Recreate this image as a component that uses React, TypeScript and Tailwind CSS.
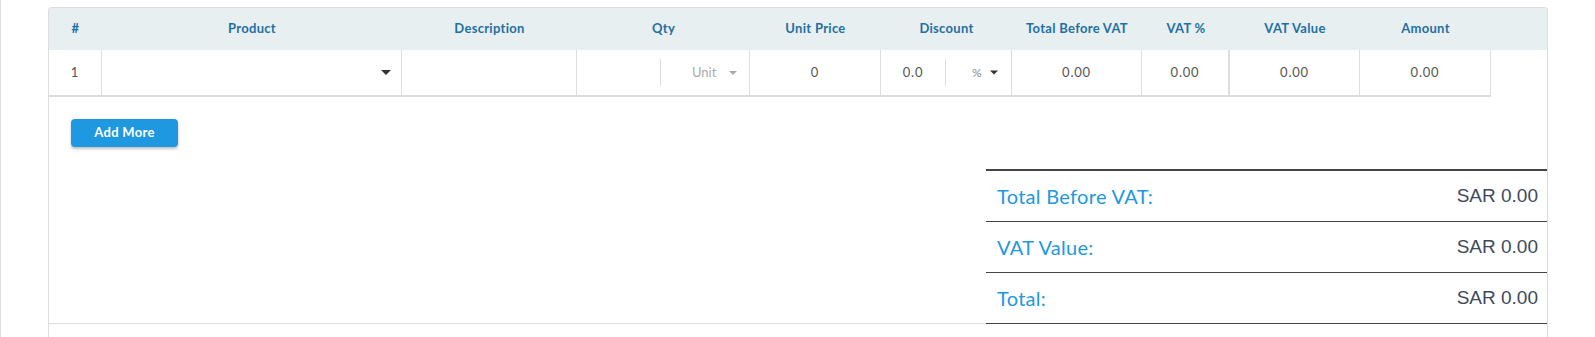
import React from 'react';

const cols = [
  { key: 'no', label: '#', w: 'w-[53px]' },
  { key: 'product', label: 'Product', w: 'w-[300px]' },
  { key: 'desc', label: 'Description', w: 'w-[175px]' },
  { key: 'qty', label: 'Qty', w: 'w-[173px]' },
  { key: 'price', label: 'Unit Price', w: 'w-[131px]' },
  { key: 'discount', label: 'Discount', w: 'w-[131px]' },
  { key: 'tbv', label: 'Total Before VAT', w: 'w-[130px]' },
  { key: 'vatp', label: 'VAT %', w: 'w-[88px]' },
  { key: 'vatv', label: 'VAT Value', w: 'w-[130px]' },
  { key: 'amount', label: 'Amount', w: 'w-[131px]' },
];

function Caret({ className }: { className: string }) {
  return (
    <svg viewBox="0 0 10 5" className={className} aria-hidden>
      <path d="M0 0h10L5 5z" fill="currentColor" />
    </svg>
  );
}

function SummaryRow({ label, value, first }: { label: string; value: string; first?: boolean }) {
  return (
    <div
      className={`flex items-center justify-between border-b border-[#444] pl-[11px] pr-[9px] ${
        first ? 'h-[53px] border-t-2' : 'h-[51px]'
      }`}
    >
      <span className="font-['Lato',sans-serif] text-[20px] tracking-[0.3px] text-[#1e98e0]">{label}</span>
      <span className="font-['Liberation_Sans',Arial,sans-serif] text-[19px] text-[#3e4a5c]">{value}</span>
    </div>
  );
}

export default function App() {
  return (
    <div className="h-[337px] overflow-hidden border-l border-[#dddddd] bg-white pl-[47px] pt-[7px] font-['Lato',sans-serif]">
      <div className="flex h-[400px] w-[1500px] flex-col rounded-t-[4px] border border-b-0 border-[#dddddd]">
        {/* header */}
        <div className="flex h-[42px] items-center rounded-t-[3px] bg-[#e8eff1]">
          {cols.map((c) => (
            <div
              key={c.key}
              className={`${c.w} flex shrink-0 justify-center whitespace-nowrap text-[13px] font-bold tracking-[0.3px] text-[#1f6fa3]`}
            >
              {c.label}
            </div>
          ))}
        </div>

        {/* line row */}
        <div className="flex h-[47px] w-[1442px] border-b-2 border-[#dddddd] text-[13px] tracking-[0.8px] text-[#555]">
          <div className="flex w-[53px] shrink-0 items-center justify-center border-r border-[#dddddd]">1</div>
          <div className="flex w-[300px] shrink-0 items-center justify-end border-r border-[#dddddd] pr-[10px]">
            <Caret className="h-[5px] w-[10px] text-[#333]" />
          </div>
          <div className="w-[175px] shrink-0 border-r border-[#dddddd]" />
          <div className="flex w-[173px] shrink-0 items-center border-r border-[#dddddd]">
            <div className="h-full w-[83px]" />
            <div className="h-[27px] w-px bg-[#dddddd]" />
            <div className="flex flex-1 items-center pl-[31px] tracking-normal text-[#aaa]">
              <span>Unit</span>
              <Caret className="ml-[13px] h-[4px] w-[8px] text-[#aaa]" />
            </div>
          </div>
          <div className="flex w-[131px] shrink-0 items-center justify-center border-r border-[#dddddd]">0</div>
          <div className="flex w-[131px] shrink-0 items-center border-r border-[#dddddd]">
            <div className="flex w-[64px] justify-center">0.0</div>
            <div className="h-[27px] w-px bg-[#dddddd]" />
            <div className="flex flex-1 items-center pl-[26px] tracking-normal text-[#888]">
              <span className="text-[12px]">%</span>
              <Caret className="ml-[8px] h-[5px] w-[8px] text-[#333]" />
            </div>
          </div>
          <div className="flex w-[130px] shrink-0 items-center justify-center border-r border-[#dddddd]">0.00</div>
          <div className="flex w-[88px] shrink-0 items-center justify-center border-r-2 border-[#dddddd]">0.00</div>
          <div className="flex w-[130px] shrink-0 items-center justify-center border-r border-[#dddddd]">0.00</div>
          <div className="flex w-[131px] shrink-0 items-center justify-center border-r border-[#dddddd]">0.00</div>
        </div>

        <div className="pl-[22px] pt-[22px]">
          <button
            type="button"
            className="h-[28px] w-[107px] rounded-[4px] bg-[#1e98e0] text-[13px] font-bold tracking-[0.3px] text-white shadow-[0_2px_3px_rgba(0,0,0,0.25)]"
          >
            Add More
          </button>
        </div>

        <div className="relative z-10 ml-auto mt-[22px] w-[561px]">
          <SummaryRow label="Total Before VAT:" value="SAR 0.00" first />
          <SummaryRow label="VAT Value:" value="SAR 0.00" />
          <SummaryRow label="Total:" value="SAR 0.00" />
        </div>
        <div className="-mt-px flex-1 border-t border-[#dddddd]" />
      </div>
    </div>
  );
}
